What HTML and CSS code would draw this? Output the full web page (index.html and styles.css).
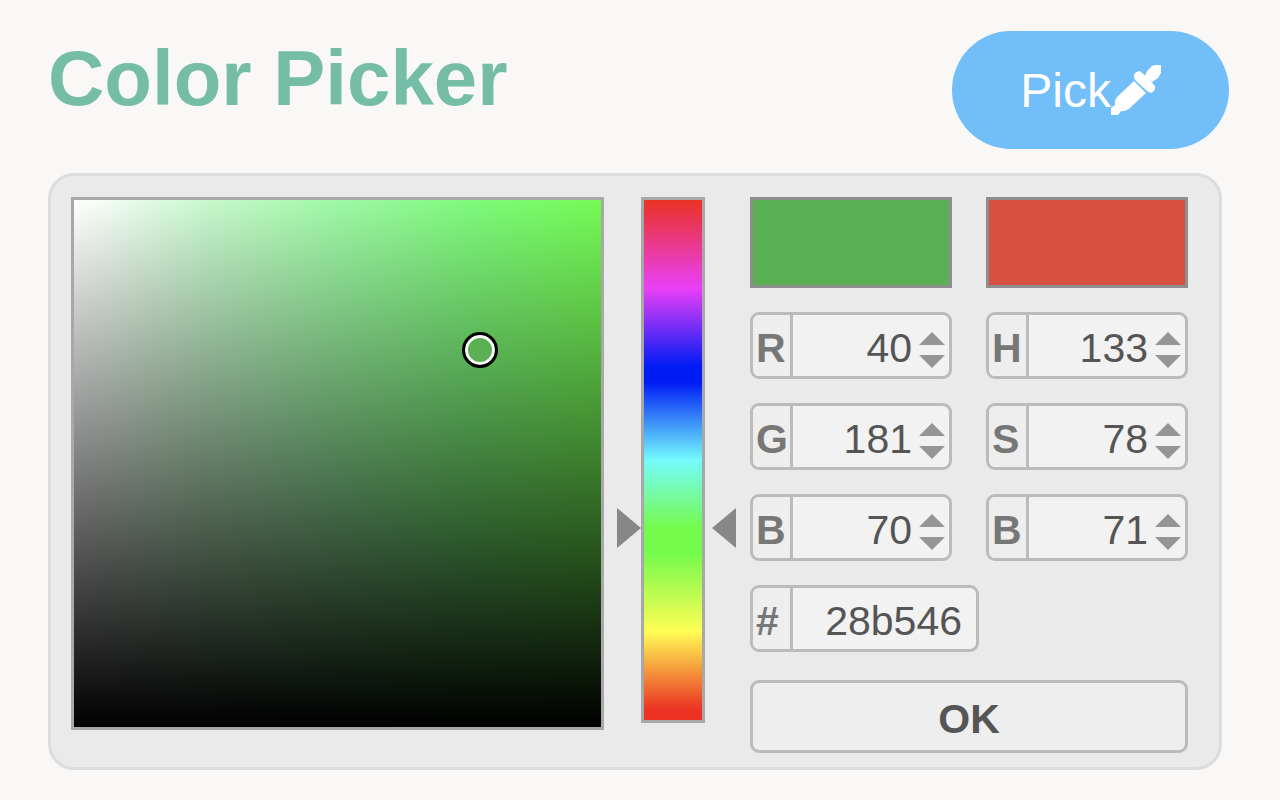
FILE: index.html
```html
<!DOCTYPE html>
<html lang="en">

<head>
  <meta charset="UTF-8" />
  <meta name="viewport" content="width=device-width, initial-scale=1.0" />
  <title>Color Picker</title>
  <link rel="stylesheet" href="styles.css">
</head>

<body>
  <header class="header">
    <h1>Color Picker</h1>
    <button class="pick" type="button">Pick<svg class="dropper" viewBox="0 0 50 50" aria-hidden="true">
        <path d="M23 16 L35 28 L21 41 Q16 47 10 46 L7 50 H0 V43 L4 40 Q3 35 7 31 Z" />
        <path d="M23 13 Q22 7 29 6 L37 13 L44 21 Q45 26 40 28 L36 26 L25 16 Z" />
        <path d="M34 11 L36 6 L41 1 L44 0 H50 V8 L47 13 L41 17 Z" />
      </svg></button>
  </header>

  <main class="panel">
    <div class="shade">
      <span class="cursor" style="left: 77%; top: 28.5%"></span>
    </div>

    <div class="hue-wrap">
      <input class="hue" type="range" min="0" max="360" value="133" aria-label="Hue">
      <span class="arrow arrow-left" style="top: 63%"></span>
      <span class="arrow arrow-right" style="top: 63%"></span>
    </div>

    <form class="values">
      <div class="swatch swatch-new"></div>
      <div class="swatch swatch-old"></div>

      <div class="field">
        <label for="red">R</label>
        <input type="number" id="red" min="0" max="255" value="40">
        <div class="spin">
          <button type="button" class="up" aria-label="Increase red"></button>
          <button type="button" class="down" aria-label="Decrease red"></button>
        </div>
      </div>
      <div class="field">
        <label for="hue">H</label>
        <input type="number" id="hue" min="0" max="360" value="133">
        <div class="spin">
          <button type="button" class="up" aria-label="Increase hue"></button>
          <button type="button" class="down" aria-label="Decrease hue"></button>
        </div>
      </div>
      <div class="field">
        <label for="green">G</label>
        <input type="number" id="green" min="0" max="255" value="181">
        <div class="spin">
          <button type="button" class="up" aria-label="Increase green"></button>
          <button type="button" class="down" aria-label="Decrease green"></button>
        </div>
      </div>
      <div class="field">
        <label for="saturation">S</label>
        <input type="number" id="saturation" min="0" max="100" value="78">
        <div class="spin">
          <button type="button" class="up" aria-label="Increase saturation"></button>
          <button type="button" class="down" aria-label="Decrease saturation"></button>
        </div>
      </div>
      <div class="field">
        <label for="blue">B</label>
        <input type="number" id="blue" min="0" max="255" value="70">
        <div class="spin">
          <button type="button" class="up" aria-label="Increase blue"></button>
          <button type="button" class="down" aria-label="Decrease blue"></button>
        </div>
      </div>
      <div class="field">
        <label for="brightness">B</label>
        <input type="number" id="brightness" min="0" max="100" value="71">
        <div class="spin">
          <button type="button" class="up" aria-label="Increase brightness"></button>
          <button type="button" class="down" aria-label="Decrease brightness"></button>
        </div>
      </div>
      <div class="field field-hex">
        <label for="hex">#</label>
        <input type="text" id="hex" maxlength="6" value="28b546">
      </div>

      <button class="ok" type="button">OK</button>
    </form>
  </main>

  <script>
    // Step the number next to the arrow that was clicked
    document.querySelectorAll(".spin button").forEach((button) => {
      button.addEventListener("click", () => {
        let input = button.closest(".field").querySelector("input");
        if (button.className == "up") {
          input.stepUp();
        } else {
          input.stepDown();
        }
      });
    });
  </script>
</body>

</html>
```

FILE: styles.css
```css
* {
  box-sizing: border-box;
}

body {
  margin: 0;
  padding: 31px 51px 30px 48px;
  background-color: #f9f8f6;
  font-family: "Liberation Sans", Arial, sans-serif;
}

button,
input {
  margin: 0;
  padding: 0;
  border: none;
  background: none;
  font-family: inherit;
}

button {
  cursor: pointer;
}

.header {
  display: flex;
  justify-content: space-between;
  align-items: flex-start;
}

h1 {
  margin: 0;
  color: #76bda8;
  font-size: 78px;
  line-height: 94px;
}

.pick {
  display: flex;
  align-items: center;
  height: 118px;
  padding: 0 68px;
  border-radius: 59px;
  background-color: #71bef9;
  color: white;
  font-size: 48px;
}

.dropper {
  width: 50px;
  height: 50px;
  fill: white;
}

.panel {
  display: flex;
  align-items: flex-start;
  margin: 24px 7px 0 0;
  padding: 21px 31px 14px 20px;
  border: 3px solid #dcdcdc;
  border-radius: 26px;
  background-color: #eaeaea;
}

/* saturation and brightness square */
.shade {
  position: relative;
  flex: 1;
  aspect-ratio: 1;
  border: 3px solid #a8a8a8;
  background: linear-gradient(to top, black, transparent),
    linear-gradient(to right, white, #c8f8cd 25%, #9ef9a5 50%, #7ffa7c 75%, #75fb55);
}

.cursor {
  position: absolute;
  width: 36px;
  height: 36px;
  border: 3px solid black;
  border-radius: 50%;
  background-color: #5bb054;
  box-shadow: inset 0 0 0 3px white;
  transform: translate(-50%, -50%);
}

.hue-wrap {
  position: relative;
  margin: 0 45px 0 37px;
}

.hue {
  display: block;
  appearance: none;
  writing-mode: vertical-lr;
  direction: rtl;
  width: 64px;
  height: 526px;
  border: 3px solid #a8a8a8;
  background: linear-gradient(#e93323, #ea3ff7 17%, #001cf5 32%, #001cf5 35%, #75fbfd 50%, #75fb4c 63%, #75fb4c 68%, #fffd54 83%, #eb3223 98%);
}

.hue::-webkit-slider-thumb {
  appearance: none;
  width: 58px;
  height: 2px;
  background: transparent;
}

.arrow {
  position: absolute;
  border: 20px solid transparent;
  transform: translateY(-50%);
}

.arrow-left {
  right: 100%;
  border-right: none;
  border-left: 24px solid #878787;
}

.arrow-right {
  left: 100%;
  margin-left: 7px;
  border-left: none;
  border-right: 24px solid #878787;
}

.values {
  display: grid;
  grid-template-columns: 202px 202px;
  gap: 24px 34px;
}

.swatch {
  height: 91px;
  border: 3px solid #8e8e8e;
}

.swatch-new {
  background-color: #5bb054;
}

.swatch-old {
  background-color: #d85040;
}

.field {
  display: flex;
  height: 67px;
  border: 3px solid #bbb;
  border-radius: 9px;
  background-color: #f2f2f2;
  font-size: 41px;
  line-height: 59px;
  overflow: hidden;
}

.field label {
  width: 40px;
  padding: 4px 0 0 3px;
  border-right: 3px solid #bbb;
  background-color: #eee;
  color: #777;
  font-weight: bold;
}

.field input {
  flex: 1;
  min-width: 0;
  padding-top: 6px;
  color: #555;
  font-size: 41px;
  text-align: right;
  appearance: textfield;
}

.field input::-webkit-inner-spin-button {
  display: none;
}

.field-hex {
  grid-column: 1 / -1;
  width: 229px;
}

.field-hex input {
  padding-right: 14px;
}

.spin {
  display: flex;
  flex-direction: column;
  justify-content: center;
  gap: 10px;
  margin: 9px 4px 0 7px;
}

.spin button {
  border: 13px solid transparent;
}

.spin .up {
  border-top: none;
  border-bottom-color: #959595;
}

.spin .down {
  border-bottom: none;
  border-top-color: #959595;
}

.ok {
  grid-column: 1 / -1;
  height: 73px;
  margin-top: 4px;
  padding-top: 6px;
  border: 3px solid #bbb;
  border-radius: 9px;
  background-color: #eee;
  color: #555;
  font-size: 41px;
  font-weight: bold;
}
```
